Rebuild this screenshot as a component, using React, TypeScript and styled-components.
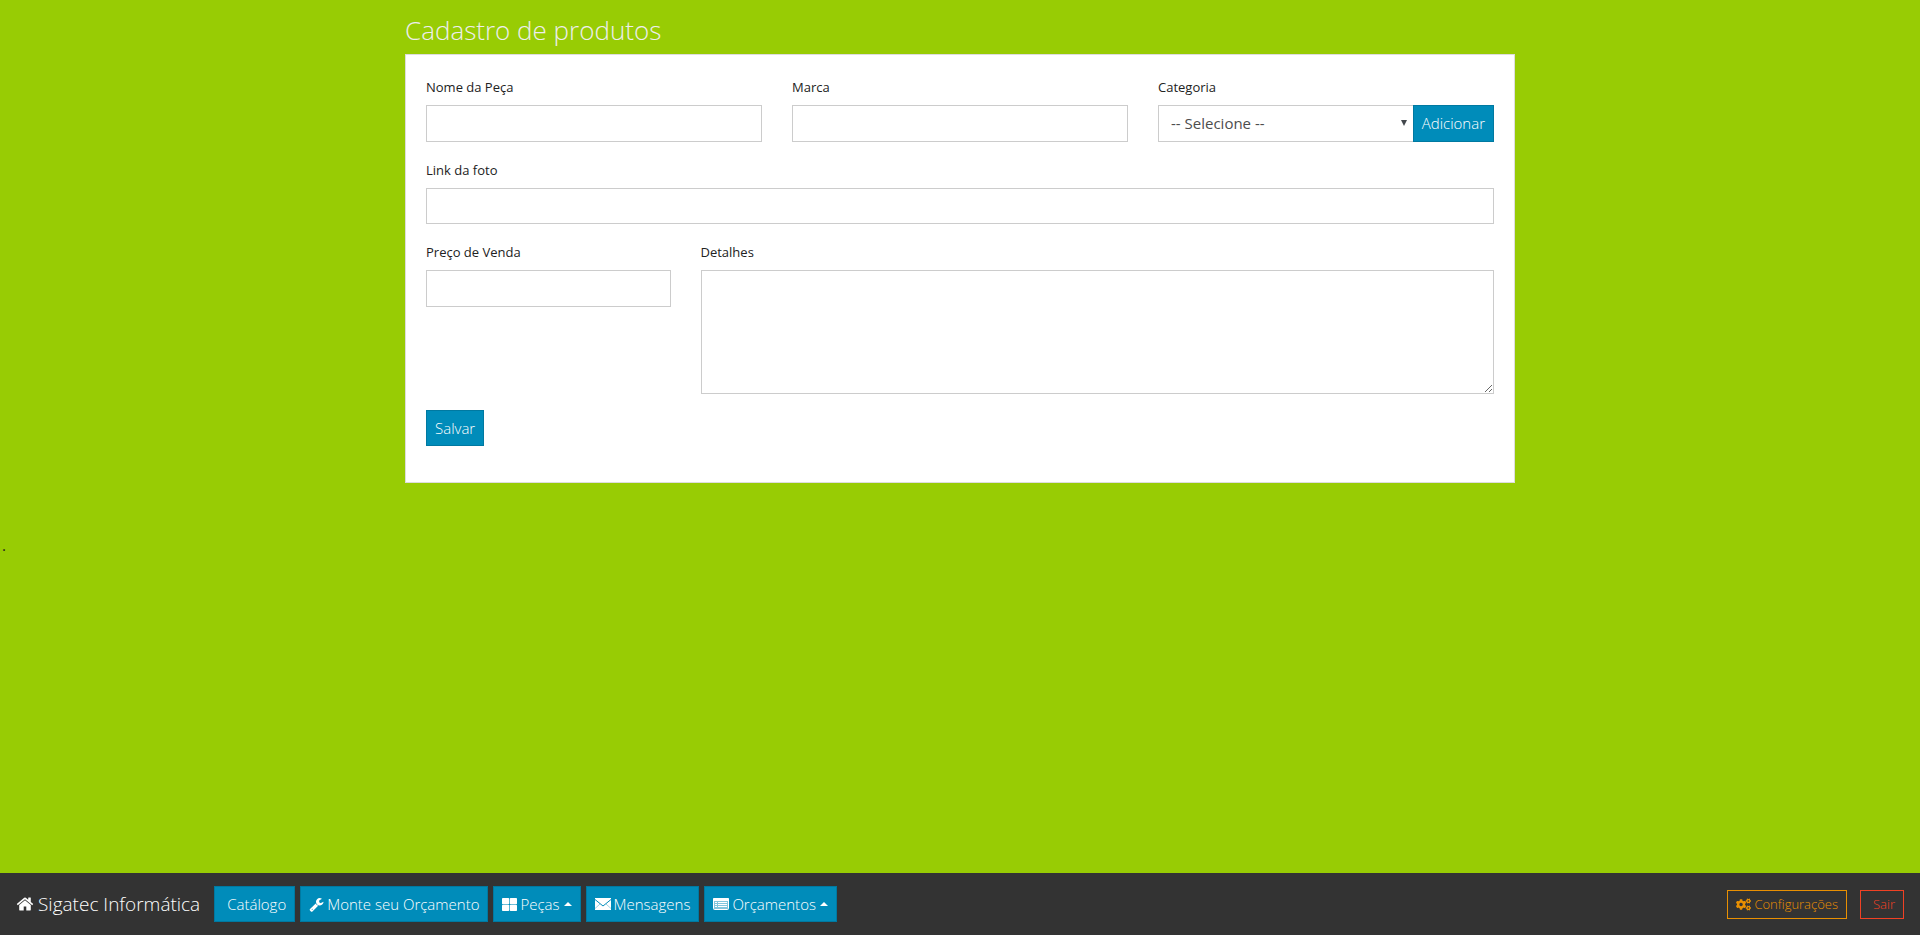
import React from "react";
import styled, { createGlobalStyle, css } from "styled-components";
import { FaCogs } from "react-icons/fa";

const GlobalStyle = createGlobalStyle`
  *, *::before, *::after { box-sizing: border-box; }
  body {
    margin: 0;
    background: #98cc04;
    color: #222;
    font-family: "Open Sans", "Liberation Sans", sans-serif;
    font-size: 15px;
    line-height: 21px;
  }
  input, select, textarea, button { font: inherit; border-radius: 0; margin: 0; }
`;

const Page = styled.div`
  display: flex;
  flex-direction: column;
  min-height: 100vh;
`;

const Main = styled.main`
  flex: 1;
`;

const Container = styled.div`
  max-width: 1110px;
  margin: 0 auto;
  padding-top: 12px;
`;

const Title = styled.h1`
  margin: 0;
  padding-bottom: 6px;
  color: #eee;
  font-size: 26px;
  font-weight: 300;
  line-height: 36px;
`;

const Panel = styled.form`
  display: grid;
  grid-template-columns: repeat(12, minmax(0, 1fr));
  column-gap: 30px;
  row-gap: 16px;
  padding: 20px 20px 36px;
  background: #fff;
  border: 1px solid #ddd;
`;

const Field = styled.div<{ $span: number }>`
  grid-column: span ${(p) => p.$span};
  display: flex;
  flex-direction: column;
`;

const Label = styled.label`
  font-size: 13px;
  line-height: 24px;
  padding-bottom: 6px;
`;

const control = css`
  width: 100%;
  border: 1px solid #ccc;
  background: #fff;
  color: #4d4d4d;
  padding: 7px 12px;
`;

const Input = styled.input<{ $short?: boolean }>`
  ${control}
  height: ${(p) => (p.$short ? 36 : 37)}px;
`;

const Textarea = styled.textarea`
  ${control}
  display: block;
  height: 124px;
  resize: vertical;
`;

const Group = styled.div`
  display: flex;
`;

const SelectWrap = styled.div`
  position: relative;
  flex: 1;
`;

const Select = styled.select`
  ${control}
  height: 37px;
  border-right: 0;
  appearance: none;
`;

const SelectArrow = styled.svg`
  position: absolute;
  right: 6px;
  top: 15px;
  pointer-events: none;
`;

const blue = css`
  border: 1px solid #0079a1;
  background: #008cba;
  color: #fff;
  font-weight: 300;
  font-size: 15px;
  line-height: 21px;
  padding: 0 8px;
`;

const Button = styled.button<{ $short?: boolean }>`
  ${blue}
  height: ${(p) => (p.$short ? 36 : 37)}px;
`;

const SaveRow = styled.div`
  grid-column: 1 / -1;
  display: flex;
`;

const Note = styled.p`
  margin: 0;
  padding-top: 52px;
  padding-left: 2px;
`;

const Footer = styled.footer`
  display: flex;
  align-items: center;
  height: 62px;
  padding: 0 16px;
  background: #333;
`;

const Brand = styled.a`
  display: flex;
  align-items: center;
  gap: 4px;
  margin-right: 14px;
  color: #fff;
  font-size: 19px;
  font-weight: 300;
  text-decoration: none;
`;

const Nav = styled.nav`
  display: flex;
  gap: 5px;
  flex: 1;
`;

const NavButton = styled.button<{ $indent?: boolean }>`
  ${blue}
  display: flex;
  align-items: center;
  gap: 3px;
  height: 36px;
  padding-left: ${(p) => (p.$indent ? 12 : 8)}px;
`;

const Caret = styled.span`
  margin-left: 1px;
  border: 4px solid transparent;
  border-top: 0;
  border-bottom-color: #fff;
`;

const Actions = styled.div`
  display: flex;
  gap: 13px;
`;

const OutlineButton = styled.button<{ $color: string; $indent?: boolean }>`
  display: flex;
  align-items: center;
  gap: 3px;
  height: 29px;
  padding: 0 8px 0 ${(p) => (p.$indent ? 12 : 8)}px;
  border: 1px solid ${(p) => p.$color};
  background: transparent;
  color: ${(p) => p.$color};
  font-size: 13px;
  font-weight: 300;
`;

const HomeIcon = () => (
  <svg width="18" height="18" viewBox="0 0 1792 1792" fill="currentColor" aria-hidden="true">
    <path d="M1472 992v480q0 26-19 45t-45 19h-384v-384h-256v384h-384q-26 0-45-19t-19-45v-480q0-1 .5-3t.5-3l575-474 575 474q1 2 1 6zm223-69l-62 74q-8 9-21 11h-3q-13 0-21-7l-692-577-692 577q-12 8-24 7-13-2-21-11l-62-74q-8-10-7-23.500t11-21.500l719-599q32-26 76-26t76 26l244 204v-195q0-14 9-23t23-9h192q14 0 23 9t9 23v408l219 182q10 8 11 21.500t-7 23.500z" />
  </svg>
);

const WrenchIcon = () => (
  <svg width="15" height="15" viewBox="0 0 1792 1792" fill="currentColor" aria-hidden="true">
    <path d="M448 1472q0-26-19-45t-45-19-45 19-19 45 19 45 45 19 45-19 19-45zm644-420l-682 682q-37 37-90 37-52 0-91-37l-106-108q-38-36-38-90 0-53 38-91l681-681q39 98 114.500 173.500t173.500 114.500zm634-435q0 39-23 106-47 134-164.500 217.500t-258.500 83.500q-185 0-316.500-131.500t-131.500-316.500 131.500-316.500 316.500-131.500q58 0 121.500 16.500t107.500 46.500q16 11 16 28t-16 28l-293 169v224l193 107q5-3 79-48.500t135.500-81 70.500-35.500q15 0 23.500 10t8.500 25z" />
  </svg>
);

const TilesIcon = () => (
  <svg width="15" height="13" viewBox="0 0 15 13" fill="currentColor" aria-hidden="true">
    <rect x="0" y="0" width="7.200" height="6.200" rx="0.800" />
    <rect x="7.800" y="0" width="7.200" height="6.200" rx="0.800" />
    <rect x="0" y="6.800" width="7.200" height="6.200" rx="0.800" />
    <rect x="7.800" y="6.800" width="7.200" height="6.200" rx="0.800" />
  </svg>
);

const EnvelopeIcon = () => (
  <svg width="16" height="12" viewBox="0 0 16 12" aria-hidden="true">
    <rect width="16" height="12" fill="currentColor" />
    <path d="M0 1.500L8 8L16 1.500" fill="none" stroke="#008cba" />
    <path d="M0 10.500L5 6M16 10.500L11 6" stroke="#008cba" strokeWidth="0.400" />
  </svg>
);

const ListIcon = () => (
  <svg width="16" height="12" viewBox="0 0 16 12" aria-hidden="true">
    <rect x="0.500" y="0.500" width="15" height="11" rx="1" fill="#ffffff" fillOpacity="0.500" stroke="currentColor" />
    <rect x="0" y="0" width="16" height="3" rx="1" fill="currentColor" />
    <path d="M2 4.500H4M5 4.500H14M2 6.500H4M5 6.500H14M2 8.500H4M5 8.500H14" stroke="currentColor" />
  </svg>
);

export default function App() {
  return (
    <Page>
      <GlobalStyle />
      <Main>
        <Container>
          <Title>Cadastro de produtos</Title>
          <Panel onSubmit={(e) => e.preventDefault()}>
            <Field $span={4}>
              <Label htmlFor="nome">Nome da Peça</Label>
              <Input id="nome" type="text" />
            </Field>
            <Field $span={4}>
              <Label htmlFor="marca">Marca</Label>
              <Input id="marca" type="text" />
            </Field>
            <Field $span={4}>
              <Label htmlFor="categoria">Categoria</Label>
              <Group>
                <SelectWrap>
                  <Select id="categoria">
                    <option>-- Selecione --</option>
                  </Select>
                  <SelectArrow width="6" height="6" viewBox="0 0 6 6" aria-hidden="true">
                    <path d="M0 0H6L3 6Z" fill="#43484d" />
                  </SelectArrow>
                </SelectWrap>
                <Button type="button">Adicionar</Button>
              </Group>
            </Field>
            <Field $span={12}>
              <Label htmlFor="foto">Link da foto</Label>
              <Input id="foto" type="text" $short />
            </Field>
            <Field $span={3}>
              <Label htmlFor="preco">Preço de Venda</Label>
              <Input id="preco" type="text" />
            </Field>
            <Field $span={9}>
              <Label htmlFor="detalhes">Detalhes</Label>
              <Textarea id="detalhes" />
            </Field>
            <SaveRow>
              <Button type="submit" $short>Salvar</Button>
            </SaveRow>
          </Panel>
        </Container>
        <Note>.</Note>
      </Main>
      <Footer>
        <Brand href="#">
          <HomeIcon />
          Sigatec Informática
        </Brand>
        <Nav>
          <NavButton type="button" $indent>Catálogo</NavButton>
          <NavButton type="button"><WrenchIcon />Monte seu Orçamento</NavButton>
          <NavButton type="button"><TilesIcon />Peças<Caret /></NavButton>
          <NavButton type="button"><EnvelopeIcon />Mensagens</NavButton>
          <NavButton type="button"><ListIcon />Orçamentos<Caret /></NavButton>
        </Nav>
        <Actions>
          <OutlineButton type="button" $color="#e99002"><FaCogs size={15} />Configurações</OutlineButton>
          <OutlineButton type="button" $color="#f04124" $indent>Sair</OutlineButton>
        </Actions>
      </Footer>
    </Page>
  );
}
